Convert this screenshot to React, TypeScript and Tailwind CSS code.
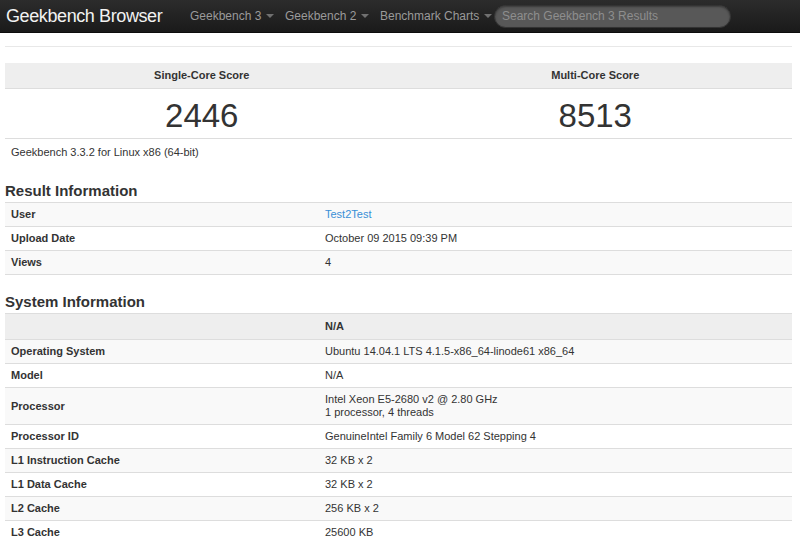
import React from "react";

const Caret = () => (
  <span className="ml-[5px] inline-block w-0 h-0 border-l-[4px] border-r-[4px] border-t-[4px] border-l-transparent border-r-transparent border-t-[#707070] align-middle" />
);

type Row = { label: string; value: React.ReactNode };

const resultRows: Row[] = [
  { label: "User", value: <span className="text-[#3a8fd6]">Test2Test</span> },
  { label: "Upload Date", value: "October 09 2015 09:39 PM" },
  { label: "Views", value: "4" },
];

const sysRows: Row[] = [
  { label: "Operating System", value: "Ubuntu 14.04.1 LTS 4.1.5-x86_64-linode61 x86_64" },
  { label: "Model", value: "N/A" },
  {
    label: "Processor",
    value: (
      <div className="leading-[13px]">
        <div>Intel Xeon E5-2680 v2 @ 2.80 GHz</div>
        <div>1 processor, 4 threads</div>
      </div>
    ),
  },
  { label: "Processor ID", value: "GenuineIntel Family 6 Model 62 Stepping 4" },
  { label: "L1 Instruction Cache", value: "32 KB x 2" },
  { label: "L1 Data Cache", value: "32 KB x 2" },
  { label: "L2 Cache", value: "256 KB x 2" },
  { label: "L3 Cache", value: "25600 KB" },
];

function InfoTable({ rows, header }: { rows: Row[]; header?: string }) {
  return (
    <div className="border-t border-[#ddd]">
      {header && (
        <div className="flex bg-[#eeeeee] border-b border-[#ddd] h-[26px] items-center">
          <div className="w-[315px] px-[6px]" />
          <div className="flex-1 px-[5px] font-bold">{header}</div>
        </div>
      )}
      {rows.map((r, i) => (
        <div
          key={r.label}
          className={`flex items-center border-b border-[#ddd] min-h-[24px] py-[5px] ${
            i % 2 === 0 ? "bg-[#f9f9f9]" : "bg-white"
          }`}
        >
          <div className="w-[315px] px-[6px] font-bold">{r.label}</div>
          <div className="flex-1 px-[5px]">{r.value}</div>
        </div>
      ))}
    </div>
  );
}

export default function App() {
  return (
    <div
      className="w-[800px] h-[541px] overflow-hidden bg-white text-[11px] leading-[13px] text-[#333]"
      style={{ fontFamily: '"Liberation Sans", Arial, sans-serif' }}
    >
      <div className="h-[33px] bg-gradient-to-b from-[#2c2c2c] to-[#1a1a1a] border-b border-[#0d0d0d] flex items-center">
        <div className="pl-[6px] text-[18px] text-[#f2f2f2] w-[190px] tracking-[-0.4px]">Geekbench Browser</div>
        <div className="text-[12px] text-[#9a9a9a] flex items-center">
          <span className="w-[95px]">Geekbench 3<Caret /></span>
          <span className="w-[95px]">Geekbench 2<Caret /></span>
          <span className="w-[114px]">Benchmark Charts<Caret /></span>
        </div>
        <div className="w-[237px] h-[23px] rounded-full bg-[#585858] border border-[#333] shadow-[inset_0_1px_2px_rgba(0,0,0,0.35)] flex items-center px-[7px] text-[12px] text-[#8e8e8e]">
          Search Geekbench 3 Results
        </div>
      </div>

      <div className="mx-[5px] w-[787px]">
        <div className="mt-[13px] border-b border-[#e8e8e8]" />

        <div className="mt-[16px] border-b border-[#ddd]">
          <div className="flex bg-[#eeeeee] border-b border-[#ddd] h-[26px] items-center font-bold">
            <div className="flex-1 text-center">Single-Core Score</div>
            <div className="flex-1 text-center">Multi-Core Score</div>
          </div>
          <div className="flex h-[49px] items-center pt-[3px] text-[33px] leading-[33px]">
            <div className="flex-1 text-center">2446</div>
            <div className="flex-1 text-center">8513</div>
          </div>
        </div>

        <div className="mt-[7px] pl-[6px]">Geekbench 3.3.2 for Linux x86 (64-bit)</div>

        <div className="mt-[23px] mb-[2px] text-[15px] leading-[18px] font-bold">Result Information</div>
        <InfoTable rows={resultRows} />

        <div className="mt-[18px] mb-[2px] text-[15px] leading-[18px] font-bold">System Information</div>
        <InfoTable rows={sysRows} header="N/A" />
      </div>
    </div>
  );
}
